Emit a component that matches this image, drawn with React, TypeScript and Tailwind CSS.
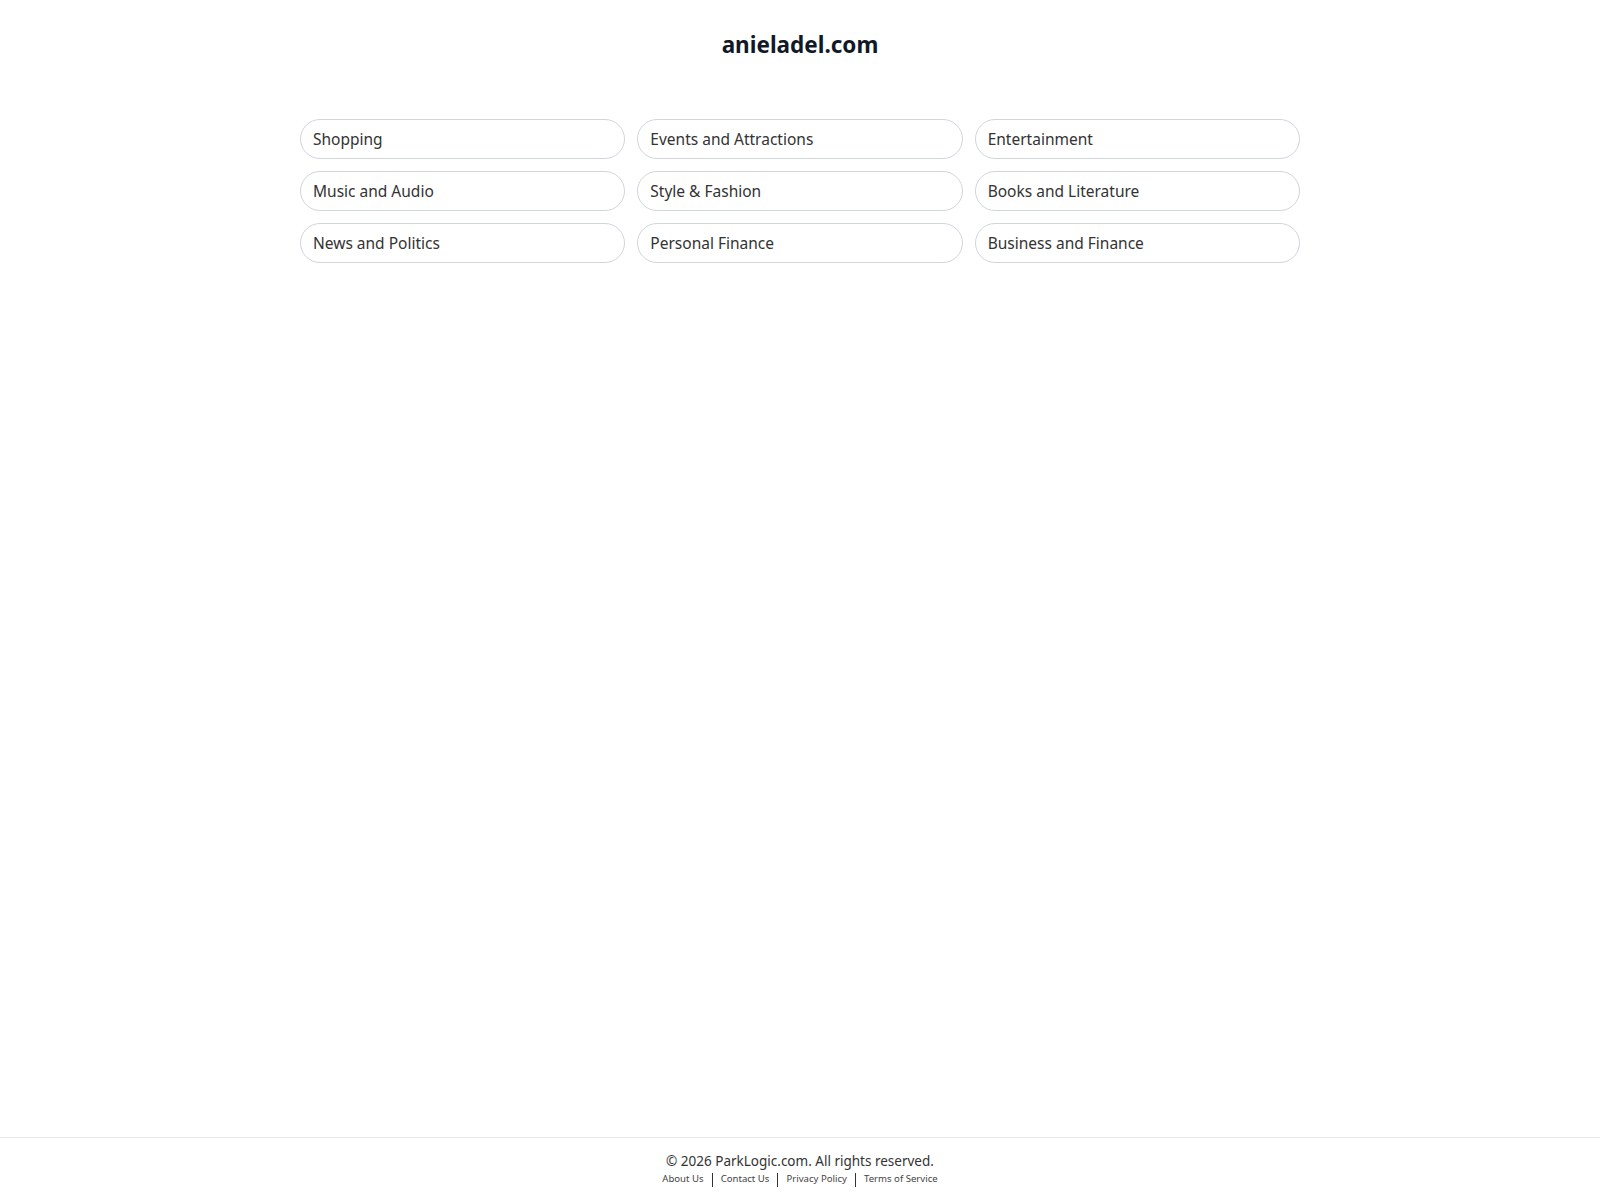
const categories = [
  'Shopping',
  'Events and Attractions',
  'Entertainment',
  'Music and Audio',
  'Style & Fashion',
  'Books and Literature',
  'News and Politics',
  'Personal Finance',
  'Business and Finance',
]

const links = ['About Us', 'Contact Us', 'Privacy Policy', 'Terms of Service']

export default function App() {
  return (
    <div
      className="min-h-screen flex flex-col bg-white text-[#333]"
      style={{ fontFamily: '"Noto Sans", "Open Sans", sans-serif' }}
    >
      <main className="flex-1">
        <h1 className="pt-[29px] text-center text-[22.5px] leading-8 font-bold text-[#111827]">
          anieladel.com
        </h1>

        <div className="mx-auto mt-[58px] grid w-[1000px] grid-cols-3 gap-3">
          {categories.map((c) => (
            <a
              key={c}
              href="#"
              className="flex h-10 items-center rounded-full border border-gray-300 px-3 pt-[2px] text-[15.5px] text-[#333]"
            >
              {c}
            </a>
          ))}
        </div>
      </main>

      {/* footer */}
      <footer className="h-[63px] border-t border-gray-200 pt-[13px] text-center">
        <p className="text-[13.5px] leading-5 text-[#333]">© 2026 ParkLogic.com. All rights reserved.</p>
        <div className="flex items-center justify-center text-[9.6px] leading-4 text-[#444]">
          {links.map((l, i) => (
            <span key={l} className="flex items-center">
              {i > 0 && <span className="mx-2 mt-[2px] h-[14px] w-px bg-[#333]" />}
              <a href="#">{l}</a>
            </span>
          ))}
        </div>
      </footer>
    </div>
  )
}
